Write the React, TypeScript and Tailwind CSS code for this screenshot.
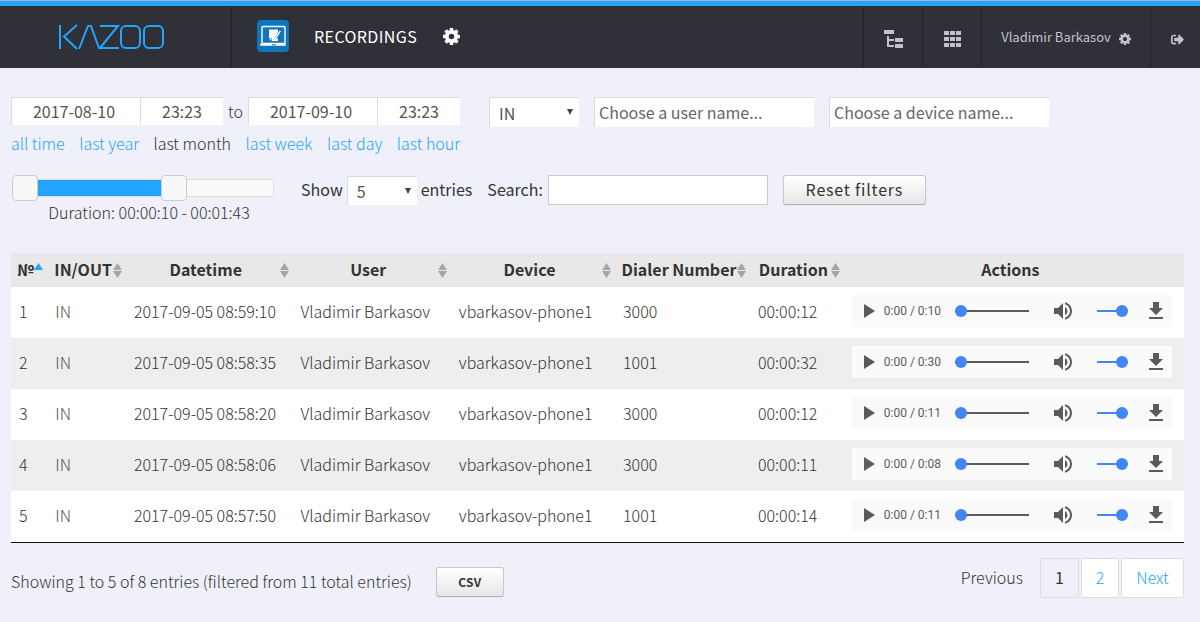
import type { ReactNode } from "react";
import { FaSignOutAlt } from "react-icons/fa";
import { MdFileDownload, MdPlayArrow, MdVolumeUp } from "react-icons/md";

type Recording = { id: number; date: string; dialer: string; duration: string; length: string };

const recordings: Recording[] = [
  { id: 1, date: "2017-09-05 08:59:10", dialer: "3000", duration: "00:00:12", length: "0:10" },
  { id: 2, date: "2017-09-05 08:58:35", dialer: "1001", duration: "00:00:32", length: "0:30" },
  { id: 3, date: "2017-09-05 08:58:20", dialer: "3000", duration: "00:00:12", length: "0:11" },
  { id: 4, date: "2017-09-05 08:58:06", dialer: "3000", duration: "00:00:11", length: "0:08" },
  { id: 5, date: "2017-09-05 08:57:50", dialer: "1001", duration: "00:00:14", length: "0:11" },
];

const columns = [
  { label: "№", width: "w-[3.1%]", sort: "asc" },
  { label: "IN/OUT", width: "w-[6.7%]", sort: "both" },
  { label: "Datetime", width: "w-[14.2%]", sort: "both" },
  { label: "User", width: "w-[13.5%]", sort: "both" },
  { label: "Device", width: "w-[14%]", sort: "both" },
  { label: "Dialer Number", width: "w-[11.5%]", sort: "both" },
  { label: "Duration", width: "w-[8%]", sort: "both" },
  { label: "Actions", width: "w-[29%]", sort: "none" },
];

const periods = ["all time", "last year", "last month", "last week", "last day", "last hour"];

const field = "border-t border-l border-[#dcdcdc] bg-white text-[#555] outline-none";
const raised =
  "rounded-[3px] border border-[#c8c8c8] border-b-[#b0b0b0] bg-linear-to-b from-white to-[#e6e6e6] text-[#333] shadow-xs";
const dualRange =
  "pointer-events-none absolute inset-0 h-[26px] w-full appearance-none bg-transparent [&::-webkit-slider-thumb]:pointer-events-auto [&::-webkit-slider-thumb]:size-[26px] [&::-webkit-slider-thumb]:appearance-none [&::-webkit-slider-thumb]:rounded-sm [&::-webkit-slider-thumb]:border [&::-webkit-slider-thumb]:border-[#ccc] [&::-webkit-slider-thumb]:bg-[#f8f8f8]";
const playerRange =
  "h-3 appearance-none bg-transparent [&::-webkit-slider-runnable-track]:h-[2px] [&::-webkit-slider-thumb]:-mt-[5px] [&::-webkit-slider-thumb]:size-3 [&::-webkit-slider-thumb]:appearance-none [&::-webkit-slider-thumb]:rounded-full [&::-webkit-slider-thumb]:bg-[#4285f4]";

function Logo() {
  return (
    <svg role="img" aria-label="Kazoo" width="108" height="26" viewBox="0 0 108 26" fill="none" stroke="#22a5ff" strokeWidth="2">
      <line x1="3" y1="1" x2="3" y2="25" />
      <polyline points="20,1 7,12.5 20,25" />
      <polyline points="22,25 31,2 34,2 42,24 62,24" />
      <polyline points="43,2 61,2 43,24" />
      <rect x="64" y="2" width="19" height="22" rx="5" />
      <rect x="87" y="2" width="19" height="22" rx="5" />
    </svg>
  );
}

function AppIcon() {
  return (
    <svg width="32" height="32" viewBox="0 0 32 32" aria-hidden="true">
      <rect width="32" height="32" rx="4" fill="#0f76bd" />
      <rect x="5" y="6.5" width="23" height="17" rx="1" fill="none" stroke="#fff" strokeWidth="1.4" />
      <rect x="3" y="23.5" width="26" height="2.3" rx="1" fill="#fff" />
      <rect x="15" y="24.3" width="4" height="1" fill="#0f76bd" />
      <path d="M12 9.5h9V21h-6.5L12 18.5z" fill="#fff" />
      <path d="M12 18.5h2.5V21" fill="none" stroke="#0f76bd" strokeWidth=".6" />
      <path d="M23.5 11l-4.5 7.4" stroke="#0f76bd" strokeWidth="2.6" />
      <path d="M23.3 10.8l-4.4 7-1.2 1.6" fill="none" stroke="#fff" strokeWidth="1.5" />
    </svg>
  );
}

function CogIcon({ size }: { size: number }) {
  return (
    <svg width={size} height={size} viewBox="128 128 1536 1536" fill="currentColor" className="shrink-0" aria-hidden="true">
      <path d="M1152 896q0-106-75-181t-181-75-181 75-75 181 75 181 181 75 181-75 75-181zm512-109v222q0 12-8 23t-20 13l-185 28q-19 54-39 91 35 50 107 138 10 12 10 25t-9 23q-27 37-99 108t-94 71q-12 0-26-9l-138-108q-44 23-91 38-16 136-29 186-7 28-36 28h-222q-14 0-24.5-8.5t-11.5-21.5l-28-184q-49-16-90-37l-141 107q-10 9-25 9-14 0-25-11-126-114-165-168-7-10-7-23 0-12 8-23 15-21 51-66.5t54-70.5q-27-50-41-99l-183-27q-13-2-21-12.5t-8-23.5v-222q0-12 8-23t19-13l186-28q14-46 39-92-40-57-107-138-10-12-10-24 0-10 9-23 26-36 98.5-107.5t94.5-71.5q13 0 26 10l138 107q44-23 91-38 16-136 29-186 7-28 36-28h222q14 0 24.5 8.5t11.5 21.5l28 184q49 16 90 37l142-107q9-9 24-9 13 0 25 10 129 119 165 170 7 8 7 22 0 12-8 23-15 21-51 66.5t-54 70.5q26 50 41 98l183 28q13 2 21 12.5t8 23.5z" />
    </svg>
  );
}

function TreeIcon() {
  return (
    <svg width="19" height="18" viewBox="0 0 19 18" fill="#c2c2ca" aria-hidden="true">
      <rect x="0" y="0" width="10" height="4" />
      <rect x="11" y="8" width="8" height="4" />
      <rect x="11" y="14" width="8" height="4" />
      <path d="M4 6v10h6M4 10h6" fill="none" stroke="#c2c2ca" strokeWidth="2" />
    </svg>
  );
}

function GridIcon() {
  return (
    <svg width="17" height="16" viewBox="0 0 17 16" fill="#c2c2ca" aria-hidden="true">
      {[0, 6, 12].map((y) => [0, 6, 12].map((x) => <rect key={`${x}-${y}`} x={x} y={y} width="5" height="4" />))}
    </svg>
  );
}

function SortMark({ sort }: { sort: string }) {
  return (
    <svg width="9" height="15" viewBox="0 0 9 15" className="shrink-0" aria-hidden="true">
      {sort === "asc" && <path d="M4.5 0L9 7H0z" fill="#22a5ff" />}
      {sort === "both" && <path d="M4.5 0L9 7H0zM4.5 15L9 8H0z" fill="#a6a6a6" />}
    </svg>
  );
}

function Select({ label, width, height, children }: { label: string; width: string; height: string; children: ReactNode }) {
  return (
    <span className={`relative inline-block ${width}`}>
      <select aria-label={label} className={`${field} ${height} block w-full appearance-none pl-[9px] text-base font-normal`}>
        {children}
      </select>
      <svg width="6" height="6" viewBox="0 0 6 6" className="pointer-events-none absolute top-3 right-1.5" aria-hidden="true">
        <path d="M0 0h6L3 6z" fill="#444" />
      </svg>
    </span>
  );
}

function DateField({ name, date }: { name: string; date: string }) {
  return (
    <span className="flex">
      <input aria-label={`${name} date`} defaultValue={date} className={`${field} h-7 w-[129px] pr-1 pb-0.5 text-center text-base font-normal`} />
      <input aria-label={`${name} time`} defaultValue="23:23" className={`${field} h-7 w-[83px] pb-0.5 text-center text-base font-normal`} />
    </span>
  );
}

function Player({ length }: { length: string }) {
  return (
    <div className="flex h-8 w-[320px] items-center bg-[#fafafa] pr-1 text-[#5a5a5a]">
      <button aria-label="Play" className="ml-1"><MdPlayArrow size={24} /></button>
      <span className="ml-1 w-[71px] font-[Roboto,sans-serif] text-xs font-normal">0:00 / {length}</span>
      <input
        type="range"
        aria-label="Position"
        defaultValue={0}
        className={`${playerRange} w-[74px] [&::-webkit-slider-runnable-track]:bg-[#5a5a5a]`}
      />
      <button aria-label="Mute" className="ml-[22px]"><MdVolumeUp size={24} /></button>
      <input
        type="range"
        aria-label="Volume"
        defaultValue={100}
        className={`${playerRange} ml-[22px] w-[31px] [&::-webkit-slider-runnable-track]:bg-[#4285f4]`}
      />
      <a href="#download" aria-label="Download" className="ml-auto"><MdFileDownload size={24} /></a>
    </div>
  );
}

export default function App() {
  return (
    <div className="min-h-screen bg-[#f0f0fa] font-['Noto_Sans_CJK_SC',sans-serif] text-base leading-5 font-light text-[#333]">
      <header className="border-t border-[#b4b4b8] text-[#c2c2ca]">
        <div className="flex h-[67px] border-t-[5px] border-[#22a5ff] bg-[#2f3038]">
          <a href="#home" className="flex w-[232px] items-center justify-center border-r border-[#22232a] pr-2.5">
            <Logo />
          </a>
          <div className="flex flex-1 items-center pb-0.5 pl-[25px] text-white">
            <AppIcon />
            <h1 className="ml-[25px] text-base font-normal tracking-wide">RECORDINGS</h1>
            <button aria-label="Recording settings" className="ml-[26px]"><CogIcon size={17} /></button>
          </div>
          <nav className="flex font-normal *:flex *:items-center *:justify-center *:border-l *:border-[#22232a]">
            <a href="#tree" aria-label="Accounts" className="w-[59px] pt-1"><TreeIcon /></a>
            <a href="#apps" aria-label="Apps" className="w-[59px] pt-1"><GridIcon /></a>
            <a href="#profile" className="w-[169px] gap-2 text-[13px]">Vladimir Barkasov <span className="pt-1"><CogIcon size={12} /></span></a>
            <a href="#logout" aria-label="Log out" className="w-[50px] pt-1 pl-1"><FaSignOutAlt size={13} /></a>
          </nav>
        </div>
      </header>

      <main className="pt-[29px] pr-4 pl-[11px]">
        <div className="flex flex-wrap items-start">
          <div className="w-[449px]">
            <div className="flex items-center justify-between">
              <DateField name="From" date="2017-08-10" />
              <span>to</span>
              <DateField name="To" date="2017-09-10" />
            </div>
            <div className="mt-2 flex justify-between">
              {periods.map((p) => (
                <a key={p} href={`#${p.replace(" ", "-")}`} className={p === "last month" ? "" : "text-[#22a5ff]"}>{p}</a>
              ))}
            </div>
          </div>
          <div className="ml-[29px] flex gap-[15px]">
            <Select label="Direction" width="w-[90px]" height="h-[30px]"><option>IN</option><option>OUT</option></Select>
            <input aria-label="User" placeholder="Choose a user name..." className={`${field} h-[30px] w-[220px] pb-0.5 pl-1 font-normal placeholder:text-[#666]`} />
            <input aria-label="Device" placeholder="Choose a device name..." className={`${field} h-[30px] w-[220px] pb-0.5 pl-1 font-normal placeholder:text-[#666]`} />
          </div>
        </div>

        <div className="mt-[22px] flex flex-wrap items-start">
          <div className="ml-px w-[262px]">
            <div className="relative flex h-[26px] items-center">
              <div className="flex h-[18px] w-full rounded-sm border border-[#ddd] bg-[#fafafa]">
                <div className="w-3/5 bg-[#22a5ff]" />
              </div>
              <input type="range" aria-label="Minimum duration" min={10} max={157} defaultValue={10} className={dualRange} />
              <input type="range" aria-label="Maximum duration" min={10} max={157} defaultValue={103} className={dualRange} />
            </div>
            <div className="mt-px pl-3 text-center">Duration: 00:00:10 - 00:01:43</div>
          </div>
          <div className="ml-[27px] flex h-[30px] items-center font-normal">
            <span className="mr-1 pb-0.5">Show</span>
            <Select label="Entries per page" width="w-[70px]" height="h-[29px]"><option>5</option><option>10</option></Select>
            <span className="ml-1 pb-0.5">entries</span>
            <label htmlFor="search" className="mr-[5px] ml-[15px] pb-0.5">Search:</label>
            <input id="search" className="h-[30px] w-[220px] border border-[#ccc] bg-white px-1 outline-none" />
            <button className={`${raised} ml-[15px] h-[30px] w-[143px] pb-0.5 tracking-wider`}>Reset filters</button>
          </div>
        </div>

        <table className="mt-[31px] w-full table-fixed border-collapse border-b border-[#111]">
          <thead>
            <tr className="h-[34px] bg-[#e8e8e8]">
              {columns.map((c) => (
                <th key={c.label} scope="col" className={`${c.width} py-0 pr-1 pl-1.5 font-bold whitespace-nowrap`}>
                  <span className="flex items-center">
                    <span className="flex-1 pb-0.5 text-center">{c.label}</span>
                    <SortMark sort={c.sort} />
                  </span>
                </th>
              ))}
            </tr>
          </thead>
          <tbody>
            {recordings.map((r) => (
              <tr key={r.id} className="bg-white whitespace-nowrap even:bg-[#eee] [&>td]:pt-0 [&>td]:pb-[3px] [&>td]:pl-2">
                <td>{r.id}</td>
                <td className="text-[#555]">IN</td>
                <td>{r.date}</td>
                <td>Vladimir Barkasov</td>
                <td>vbarkasov-phone1</td>
                <td>{r.dialer}</td>
                <td>{r.duration}</td>
                <td><div className="py-2"><Player length={r.length} /></div></td>
              </tr>
            ))}
          </tbody>
        </table>

        <footer className="mt-[15px] flex items-start">
          <p className="mt-[13px]">Showing 1 to 5 of 8 entries (filtered from 11 total entries)</p>
          <button className={`${raised} mt-[9px] ml-6 h-[30px] w-[68px] text-xs font-bold tracking-wide`}>CSV</button>
          <nav aria-label="Pages" className="ml-auto flex h-10 gap-0.5 *:flex *:items-center *:justify-center *:pb-0.5">
            <button disabled className="mr-[15px]">Previous</button>
            <button aria-current="page" className="w-[39px] rounded-xs border border-[#ddd] font-normal">1</button>
            <button className="w-[38px] rounded-xs border border-[#ddd] bg-white text-[#22a5ff]">2</button>
            <button className="w-[63px] rounded-xs border border-[#ddd] bg-white text-[#22a5ff]">Next</button>
          </nav>
        </footer>
      </main>
    </div>
  );
}
